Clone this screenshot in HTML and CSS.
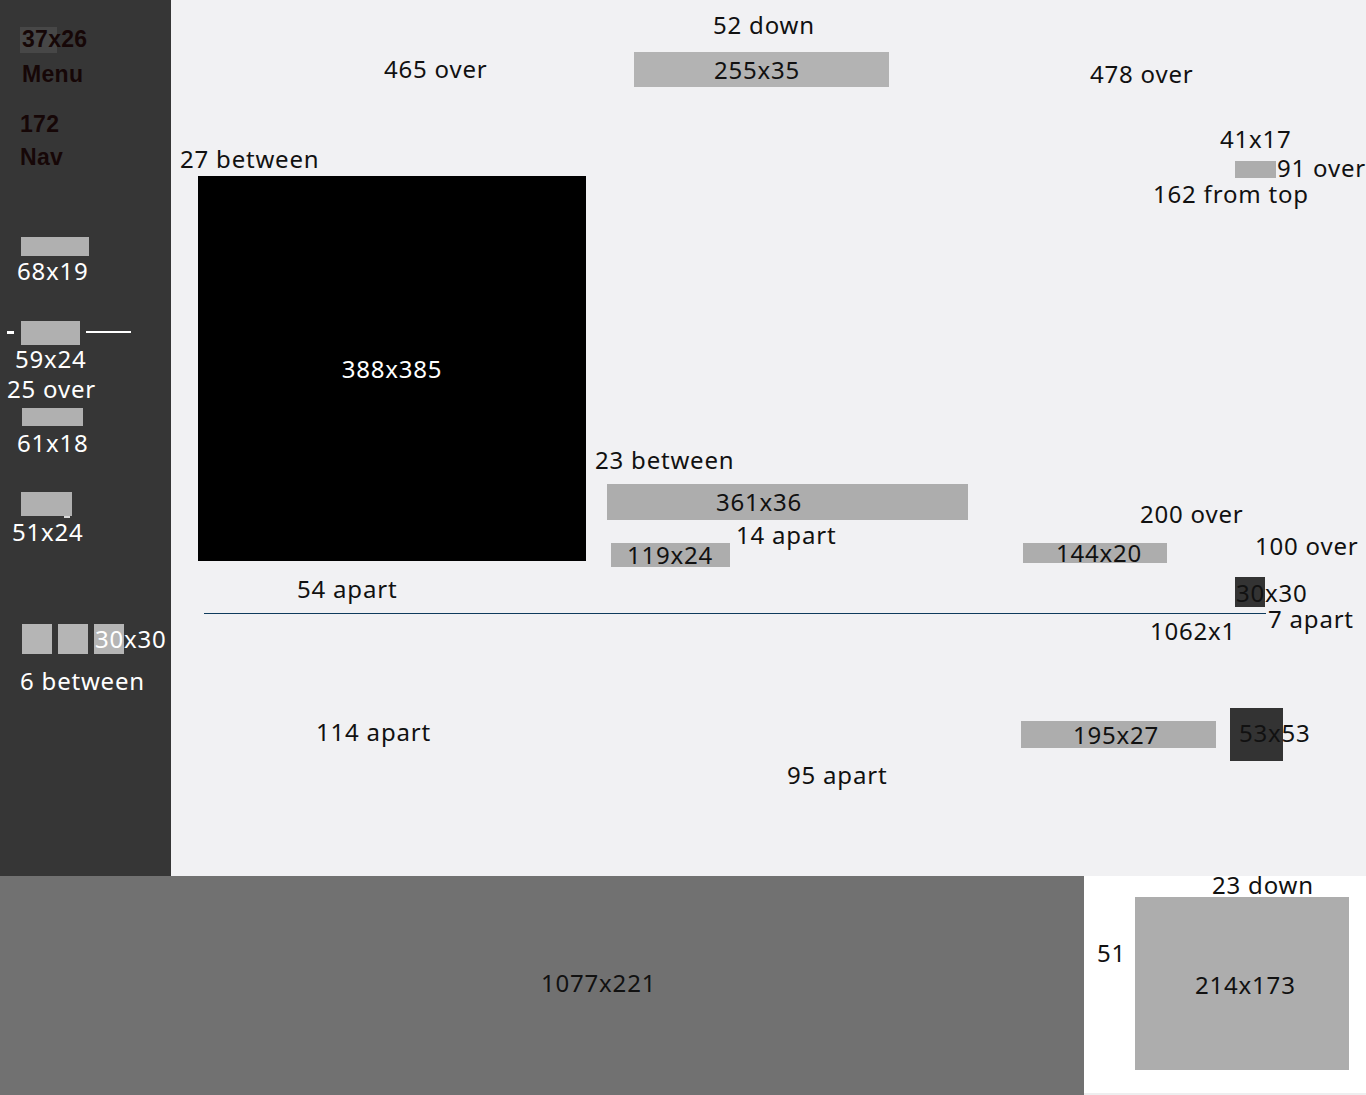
FILE: index.html
```html
<!DOCTYPE html>
<html>
<head>
    <title>Layout spec</title>
    <link rel="stylesheet" href="styles.css">
</head>
<body>
    <div class="top">
        <!-- Боковая панель -->
        <aside class="sidebar">
            <div class="hl"></div>
            <span class="dark d-37">37x26</span>
            <span class="dark d-menu">Menu</span>
            <span class="dark d-172">172</span>
            <span class="dark d-nav">Nav</span>

            <div class="sb-box sb-68"></div>
            <span class="lbl light l-68">68x19</span>

            <div class="dash"></div>
            <div class="sb-box sb-59"></div>
            <div class="rule"></div>
            <span class="lbl light l-59">59x24</span>
            <span class="lbl light l-25">25 over</span>

            <div class="sb-box sb-61"></div>
            <span class="lbl light l-61">61x18</span>

            <div class="sb-box sb-51"><i class="tick"></i></div>
            <span class="lbl light l-51">51x24</span>

            <div class="squares">
                <div class="sq"></div>
                <div class="sq"></div>
                <div class="sq"></div>
            </div>
            <span class="lbl light l-30">30x30</span>
            <span class="lbl light l-6">6 between</span>
        </aside>

        <!-- Основная область -->
        <main class="canvas">
            <span class="lbl m-52">52 down</span>
            <span class="lbl m-465">465 over</span>
            <div class="box b-255">255x35</div>
            <span class="lbl m-478">478 over</span>

            <span class="lbl m-41">41x17</span>
            <div class="box b-41"></div>
            <span class="lbl m-91">91 over</span>
            <span class="lbl m-162">162 from top</span>

            <span class="lbl m-27">27 between</span>
            <div class="hero">388x385</div>

            <span class="lbl m-23">23 between</span>
            <div class="box b-361">361x36</div>
            <span class="lbl m-14">14 apart</span>
            <div class="box b-119">119x24</div>

            <span class="lbl m-200">200 over</span>
            <div class="box b-144">144x20</div>
            <span class="lbl m-100">100 over</span>

            <div class="dark-box db-30"></div>
            <span class="lbl m-30">30x30</span>
            <span class="lbl m-54">54 apart</span>
            <div class="divider"></div>
            <span class="lbl m-7">7 apart</span>
            <span class="lbl m-1062">1062x1</span>

            <span class="lbl m-114">114 apart</span>
            <div class="box b-195">195x27</div>
            <div class="dark-box db-53"></div>
            <span class="lbl m-53">53x53</span>
            <span class="lbl m-95">95 apart</span>
        </main>
    </div>

    <footer class="footer">
        <div class="footer-main">
            <span class="lbl f-1077">1077x221</span>
        </div>
        <div class="footer-side">
            <span class="lbl f-23">23 down</span>
            <span class="lbl f-51">51</span>
            <div class="box b-214">214x173</div>
        </div>
    </footer>
</body>
</html>
```

FILE: styles.css
```css
body {
    margin: 0;
    width: 1366px;
    font-family: "Noto Sans", "Open Sans", sans-serif;
    font-size: 24px;
    line-height: 1;
    letter-spacing: 0.8px;
    color: #111;
    background: #fff;
    overflow: hidden;
}
.top {
    display: grid;
    grid-template-columns: 171px 1fr;
    height: 876px;
}
.sidebar {
    position: relative;
    background: #363636;
}
.canvas {
    position: relative;
    background: #f1f1f3;
}
.lbl {
    position: absolute;
    white-space: nowrap;
}
.light {
    color: #fff;
}

/* sidebar */
.hl {
    position: absolute;
    left: 20px;
    top: 27px;
    width: 37px;
    height: 26px;
    background: #474747;
}
.dark {
    position: absolute;
    font-family: "Liberation Sans", Arial, sans-serif;
    font-weight: bold;
    font-size: 23px;
    letter-spacing: 0.3px;
    color: #160707;
    white-space: nowrap;
}
.d-37 { left: 22px; top: 28px; }
.d-menu { left: 22px; top: 63px; }
.d-172 { left: 20px; top: 113px; }
.d-nav { left: 20px; top: 146px; }

.sb-box {
    position: absolute;
    background: #b0b0b0;
}
.sb-68 { left: 21px; top: 237px; width: 68px; height: 19px; }
.sb-59 { left: 21px; top: 321px; width: 59px; height: 24px; }
.sb-61 { left: 22px; top: 408px; width: 61px; height: 18px; }
.sb-51 { left: 21px; top: 492px; width: 51px; height: 24px; }
.tick {
    position: absolute;
    left: 43px;
    top: 24px;
    width: 6px;
    height: 2px;
    background: #d8d8d8;
}
.dash {
    position: absolute;
    left: 7px;
    top: 331px;
    width: 7px;
    height: 3px;
    background: #fff;
}
.rule {
    position: absolute;
    left: 86px;
    top: 331px;
    width: 45px;
    height: 2px;
    background: #fff;
}
.squares {
    position: absolute;
    left: 22px;
    top: 624px;
    display: flex;
    gap: 6px;
}
.sq {
    width: 30px;
    height: 30px;
    background: #b5b5b5;
}
.l-68 { left: 17px; top: 259px; }
.l-59 { left: 15px; top: 347px; }
.l-25 { left: 7px; top: 377px; }
.l-61 { left: 17px; top: 431px; }
.l-51 { left: 12px; top: 520px; }
.l-30 { left: 95px; top: 627px; }
.l-6 { left: 20px; top: 669px; }

/* canvas */
.box {
    position: absolute;
    background: #adadad;
    white-space: nowrap;
    box-sizing: border-box;
}
.b-255 { left: 463px; top: 52px; width: 255px; height: 35px; line-height: 35px; padding-left: 80px; background: #b3b3b3; }
.b-41 { left: 1064px; top: 161px; width: 41px; height: 17px; }
.b-361 { left: 436px; top: 484px; width: 361px; height: 36px; line-height: 36px; padding-left: 109px; }
.b-119 { left: 440px; top: 543px; width: 119px; height: 24px; line-height: 24px; padding-left: 16px; }
.b-144 { left: 852px; top: 543px; width: 144px; height: 20px; line-height: 20px; padding-left: 33px; }
.b-195 { left: 850px; top: 721px; width: 195px; height: 27px; line-height: 27px; padding-left: 52px; }

.hero {
    position: absolute;
    left: 27px;
    top: 176px;
    width: 388px;
    height: 385px;
    background: #000;
    color: #fff;
    display: flex;
    align-items: center;
    justify-content: center;
}
.dark-box {
    position: absolute;
    background: #333;
}
.db-30 { left: 1064px; top: 577px; width: 30px; height: 30px; }
.db-53 { left: 1059px; top: 708px; width: 53px; height: 53px; }
.divider {
    position: absolute;
    left: 33px;
    top: 613px;
    width: 1062px;
    height: 1px;
    background: #0f3b5c;
}

.m-52 { left: 542px; top: 13px; }
.m-465 { left: 213px; top: 57px; }
.m-478 { left: 919px; top: 62px; }
.m-41 { left: 1049px; top: 127px; }
.m-91 { left: 1106px; top: 156px; }
.m-162 { left: 982px; top: 182px; }
.m-27 { left: 9px; top: 147px; }
.m-23 { left: 424px; top: 448px; }
.m-14 { left: 565px; top: 523px; }
.m-200 { left: 969px; top: 502px; }
.m-100 { left: 1084px; top: 534px; }
.m-30 { left: 1065px; top: 581px; }
.m-7 { left: 1097px; top: 607px; }
.m-1062 { left: 979px; top: 619px; }
.m-54 { left: 126px; top: 577px; }
.m-114 { left: 145px; top: 720px; }
.m-95 { left: 616px; top: 763px; }
.m-53 { left: 1068px; top: 721px; }

/* footer */
.footer {
    display: flex;
    height: 219px;
}
.footer-main {
    position: relative;
    width: 1084px;
    background: #717171;
}
.footer-side {
    position: relative;
    flex: 1;
    background: #fff;
    border-bottom: 2px solid #eeeeef;
    box-sizing: border-box;
}
.f-1077 { left: 541px; top: 95px; }
.f-23 { left: 128px; top: -3px; }
.f-51 { left: 13px; top: 65px; }
.b-214 {
    left: 51px;
    top: 21px;
    width: 214px;
    height: 173px;
    padding: 76px 0 0 60px;
}
```
